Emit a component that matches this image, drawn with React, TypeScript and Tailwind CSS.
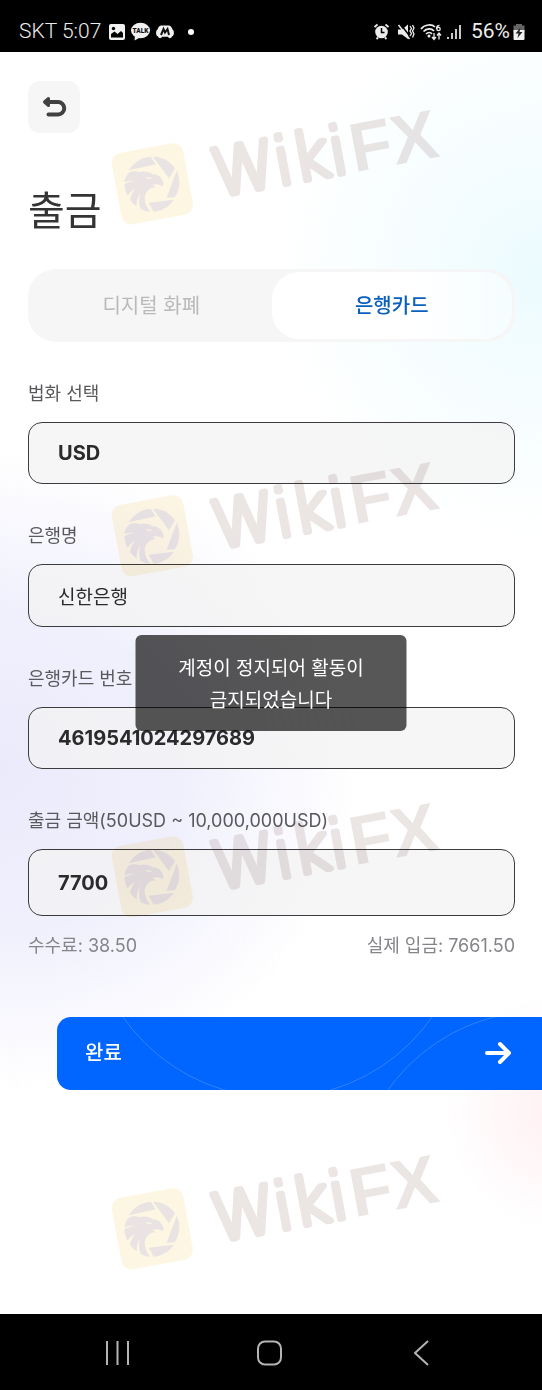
import { ReactNode } from "react";

interface FieldProps {
  id: string;
  label: string;
  children: ReactNode;
}

const controlClass =
  "block w-full appearance-none rounded-[14px] border border-[#3c3c3e] bg-[#f3f3f3]/75 px-[29px] text-[#2b2b2e] outline-none";

const watermarks = ["top-[53px]", "top-[405px]", "top-[746px]", "top-[1098px]"];

function Field({ id, label, children }: FieldProps) {
  return (
    <div className="flex flex-col gap-[14px]">
      <label htmlFor={id} className="text-lg leading-7 text-[#59595d]">
        {label}
      </label>
      {children}
    </div>
  );
}

function Watermark({ className }: { className: string }) {
  return (
    <svg
      viewBox="0 0 340 125"
      aria-hidden="true"
      className={`pointer-events-none absolute left-1/2 -ml-[166px] h-[125px] w-[340px] overflow-visible mix-blend-multiply ${className}`}
    >
      <rect x="11" y="42.500" width="72.600" height="72.600" rx="10" fill="#fdf6e3" transform="rotate(-10.5 47.3 78.8)" />
      <g transform="translate(15 45) scale(0.3333)" fill="#e9e3e3">
        <path d="M26 61C40 38 64 22 92 20L107 43Z" />
        <path d="M99 20C126 20 150 33 165 55L147 85Z" />
        <path d="M170 62C180 82 183 112 164 142L140 143Z" />
        <path d="M86 158L161 149C148 170 126 183 101 185Z" />
        <path
          fillRule="evenodd"
          d="M27 68C38 62 52 64 58 67C68 62 88 65 98 73C114 72 128 84 131 102L127 109C121 103 110 101 98 104L107 112C88 112 75 126 74 144C75 160 80 172 91 185C81 185 71 182 62 177C56 162 56 145 61 128C52 143 49 156 50 169C43 164 36 158 30 149C32 138 38 126 46 116C34 123 26 131 23 137C17 127 14 116 13 104C23 97 34 93 44 93C34 89 23 92 13 98C14 86 19 76 27 68ZM76 80C80 88 91 90 97 83C90 84 83 83 76 80Z"
        />
      </g>
      <g transform="translate(111 95) rotate(-10.5)" fill="#ebe5e4">
        <text x="1" y="-3" fontSize="65" fontWeight="200" fontFamily="'DejaVu Sans', sans-serif" stroke="#ebe5e4" strokeWidth="6" strokeLinecap="round" strokeLinejoin="round">
          Wiki
        </text>
        <text x="141" y="-2" fontSize="69" fontWeight="700" fontFamily="'Liberation Sans', Arial, sans-serif">
          FX
        </text>
      </g>
    </svg>
  );
}

function StatusBar() {
  return (
    <header className="flex h-[52px] items-center justify-between bg-black pt-[11px] pr-[17px] pl-[19px] text-[#ececec]">
      <div className="flex items-center">
        <span className="font-[Roboto,sans-serif] text-[21px] font-light">SKT 5:07</span>
        <svg width="88" height="20" viewBox="0 0 88 20" className="ml-[6px]" aria-hidden="true">
          <rect x="2" y="2" width="16" height="16" rx="2" fill="#f1f1f1" />
          <circle cx="6.500" cy="6.500" r="1.700" fill="#000" />
          <path d="M4 15.500V12L7.500 9.500L10.500 12L14 9L16 11V15.500Z" fill="#000" />
          <ellipse cx="33.500" cy="8.500" rx="9.500" ry="7.800" fill="#f1f1f1" />
          <path d="M28 14L27.500 18.500L33 15.500Z" fill="#f1f1f1" />
          <text x="33.500" y="11" fontSize="6.500" fontWeight="900" textAnchor="middle" fill="#111" fontFamily="Roboto, sans-serif">
            TALK
          </text>
          <path d="M54 3.500H62C64 3.500 65 6 65.500 7.500C67.500 8.500 67.500 14 65 14.500C64 17 61.500 16.500 61 14.800H55C54.500 16.500 52 17 51 14.500C48.500 14 48.500 8.500 50.500 7.500C51 6 52 3.500 54 3.500Z" fill="#f1f1f1" />
          <path d="M54 13L56.500 7L58 10.500L60.500 7L62 13" stroke="#111" strokeWidth="2" fill="none" />
          <circle cx="84" cy="10" r="3" fill="#fff" />
        </svg>
      </div>
      <div className="flex items-center gap-[10px]">
        <svg width="88" height="20" viewBox="0 0 88 20" fill="none" stroke="#ececec" aria-hidden="true">
          <circle cx="8.500" cy="10" r="6.300" fill="#ececec" stroke="none" />
          <path d="M1.500 5L4.500 2.500M15.500 5L12.500 2.500M3.500 17L5 15.500M13.500 17L12 15.500" strokeWidth="1.800" />
          <path d="M8.500 6V10.500H11.500" stroke="#000" strokeWidth="1.500" />
          <path d="M25 7.500H29L35 2.500V17L29 12.500H25Z" fill="#ececec" stroke="none" />
          <path d="M27 1.500L37 14.500" stroke="#000" strokeWidth="1.500" />
          <path d="M25.500 3L36.500 17" strokeWidth="1.500" />
          <path d="M37 4L38.500 6.500L37 9L38.500 11.500L37 14M39.500 3L41 6L39.500 9L41 12L39.500 15.500" strokeWidth="1.300" />
          <path d="M48 7C52 2 59 2 62 5M50.500 9.500C53.500 6 58.500 6 61 9M53 12C55 10 57.500 10 59 12" strokeWidth="1.700" />
          <circle cx="56" cy="14" r="1.500" fill="#ececec" stroke="none" />
          <path d="M66.500 3.500C64.500 3.500 63.500 5 63.500 7" strokeWidth="1.300" />
          <circle cx="65.500" cy="7" r="1.700" strokeWidth="1.300" />
          <path d="M61 11V17M59 15L61 17.500L63 15M66 17.500V11.500M64 13.500L66 11L68 13.500" strokeWidth="1.300" />
          <path d="M75 15V17M79 11V17M83 7V17M87 3V17" strokeWidth="1.700" />
        </svg>
        <div className="flex items-center gap-[3px]">
          <span className="font-[Roboto,sans-serif] text-[21px]">56%</span>
          <svg width="12" height="18" viewBox="0 0 12 18" aria-hidden="true">
            <path d="M3 2.500V1H9V2.500H11.500V9H0.500V2.500Z" fill="#666" />
            <path d="M0.500 7H11.500V16Q11.500 17 10.500 17H1.500Q0.500 17 0.500 16Z" fill="#f1f1f1" />
            <path d="M7.500 4.500L2.500 10.500H5.500L4.500 15L9.500 9H6.500Z" fill="#222" />
          </svg>
        </div>
      </div>
    </header>
  );
}

function SystemNav() {
  return (
    <nav className="flex h-[76px] items-center justify-center gap-32 bg-black pt-[2px] pr-[3px] text-[#b4b4b4]">
      <button type="button" aria-label="최근 앱">
        <svg width="24" height="26" viewBox="0 0 24 26" fill="none" stroke="currentColor" strokeWidth="2">
          <path d="M2 1V25M12.500 1V25M23 1V25" />
        </svg>
      </button>
      <button type="button" aria-label="홈">
        <svg width="26" height="26" viewBox="0 0 26 26" fill="none" stroke="currentColor" strokeWidth="2">
          <rect x="1" y="1.500" width="23" height="23" rx="7" />
        </svg>
      </button>
      <button type="button" aria-label="뒤로">
        <svg width="24" height="26" viewBox="0 0 24 26" fill="none" stroke="currentColor" strokeWidth="2">
          <path d="M17 1L4 13L17 25" />
        </svg>
      </button>
    </nav>
  );
}

export default function App() {
  return (
    <div className="flex min-h-screen flex-col bg-white font-[Inter,'Noto_Sans_CJK_KR',sans-serif]">
      <StatusBar />

      <main className="relative isolate flex-1 bg-[radial-gradient(circle_270px_at_100%_220px,#ecfbfe,#f6fdff_50%,transparent),radial-gradient(ellipse_360px_320px_at_0%_720px,#eaeafb,#f0f0fd_50%,transparent),radial-gradient(circle_120px_at_104%_1060px,#ffeff2,transparent)] pt-[29px] pb-16">
        <div className="pr-[27px] pl-7">
          <button
            type="button"
            aria-label="뒤로 가기"
            className="flex h-[52px] w-[52px] items-center justify-center rounded-xl bg-[#f6f6f6]"
          >
            <svg width="26" height="26" viewBox="0 0 26 26" fill="none" stroke="#414141" strokeWidth="4" strokeLinecap="round">
              <path d="M7 8H17A6 6 0 0 1 17 20.500H7.500" />
              <path d="M7.500 4.500L3.500 8L7.500 11.500Z" fill="#414141" strokeWidth="3" strokeLinejoin="round" />
            </svg>
          </button>

          <h1 className="mt-[50px] text-[40px] leading-[56px] text-[#343434]">출금</h1>

          <div role="tablist" className="mt-[30px] flex h-[73px] rounded-[28px] bg-[#f6f6f6] p-[3px] text-xl">
            <button type="button" role="tab" aria-selected="false" className="flex-1 text-[#b9b9b9]">
              디지털 화폐
            </button>
            <button
              type="button"
              role="tab"
              aria-selected="true"
              className="flex-1 rounded-[27px] bg-linear-to-r from-white from-60% to-[#f5fdff] font-medium text-[#0b5fbd]"
            >
              은행카드
            </button>
          </div>

          <form className="mt-[38px] flex flex-col gap-[38px]">
            <Field id="currency" label="법화 선택">
              <select id="currency" defaultValue="USD" className={`h-[62px] text-xl font-bold ${controlClass}`}>
                <option value="USD">USD</option>
              </select>
            </Field>
            <Field id="bank" label="은행명">
              <input id="bank" defaultValue="신한은행" className={`h-[63px] text-[19px] ${controlClass}`} />
            </Field>
            <Field id="card" label="은행카드 번호">
              <input id="card" inputMode="numeric" defaultValue="4619541024297689" className={`h-[62px] text-xl font-bold ${controlClass}`} />
            </Field>
            <Field id="amount" label="출금 금액(50USD ~ 10,000,000USD)">
              <input id="amount" inputMode="decimal" defaultValue="7700" className={`h-[67px] text-xl font-bold ${controlClass}`} />
            </Field>
          </form>

          <div className="mt-4 flex justify-between text-lg leading-7 text-[#858589]">
            <p>수수료: 38.50</p>
            <p>실제 입금: 7661.50</p>
          </div>
        </div>

        <div className="mt-[57px] pl-[57px]">
          <button
            type="submit"
            className="relative flex h-[73px] w-full items-center justify-between overflow-hidden rounded-l-[14px] bg-[#0165ff] pr-[30px] pb-[2px] pl-7 text-xl font-medium text-white"
          >
            <svg className="absolute inset-0 h-full w-full" fill="none" stroke="#2f84ff" aria-hidden="true">
              <circle cx="220.500" cy="-107.600" r="188.300" />
              <circle cx="484" cy="182" r="188" />
            </svg>
            <span className="relative">완료</span>
            <svg width="28" height="26" viewBox="0 0 28 26" fill="none" stroke="currentColor" strokeWidth="4" strokeLinecap="round" strokeLinejoin="round" className="relative" aria-hidden="true">
              <path d="M3 13H25M16 4L25 13L16 22" />
            </svg>
          </button>
        </div>

        {watermarks.map((top) => (
          <Watermark key={top} className={top} />
        ))}

        <div
          role="alert"
          className="absolute top-1/2 left-1/2 w-1/2 -translate-x-1/2 -translate-y-1/2 rounded-md bg-black/66 px-9 pt-[18px] pb-[14px] text-center text-[19px] leading-8 break-keep text-white"
        >
          계정이 정지되어 활동이 금지되었습니다
        </div>
      </main>

      <SystemNav />
    </div>
  );
}
